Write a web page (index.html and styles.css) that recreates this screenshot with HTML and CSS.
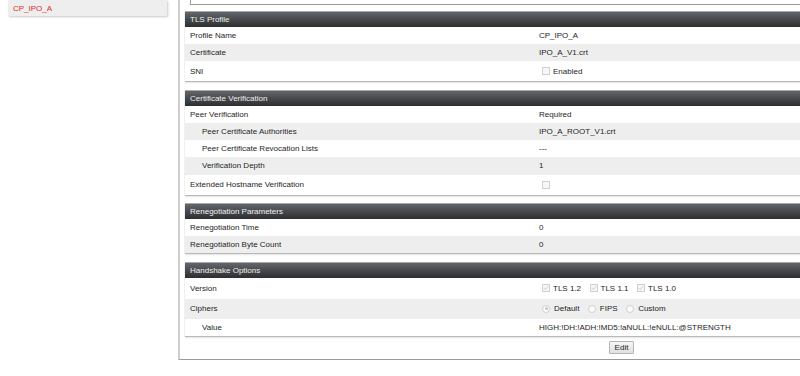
FILE: index.html
```html
<!DOCTYPE html>
<html>
<head>
<meta charset="utf-8">
<title>TLS Profile</title>
<link rel="stylesheet" href="styles.css">
</head>
<body>
<div class="page">
  <aside class="side">
    <div class="side-item">CP_IPO_A</div>
  </aside>
  <main class="main">
    <div class="topbox"></div>

    <section class="panel">
      <div class="ph">TLS Profile</div>
      <div class="row"><div class="lbl">Profile Name</div><div class="val">CP_IPO_A</div></div>
      <div class="row"><div class="lbl">Certificate</div><div class="val">IPO_A_V1.crt</div></div>
      <div class="row tall"><div class="lbl">SNI</div><div class="val"><span class="opt"><span class="cb"></span>Enabled</span></div></div>
    </section>

    <section class="panel">
      <div class="ph">Certificate Verification</div>
      <div class="row"><div class="lbl">Peer Verification</div><div class="val">Required</div></div>
      <div class="row"><div class="lbl sub">Peer Certificate Authorities</div><div class="val">IPO_A_ROOT_V1.crt</div></div>
      <div class="row"><div class="lbl sub">Peer Certificate Revocation Lists</div><div class="val">---</div></div>
      <div class="row"><div class="lbl sub">Verification Depth</div><div class="val">1</div></div>
      <div class="row tall"><div class="lbl">Extended Hostname Verification</div><div class="val"><span class="opt"><span class="cb"></span></span></div></div>
    </section>

    <section class="panel">
      <div class="ph">Renegotiation Parameters</div>
      <div class="row"><div class="lbl">Renegotiation Time</div><div class="val">0</div></div>
      <div class="row"><div class="lbl">Renegotiation Byte Count</div><div class="val">0</div></div>
    </section>

    <section class="panel">
      <div class="ph">Handshake Options</div>
      <div class="row tall v"><div class="lbl">Version</div><div class="val">
        <span class="opt"><span class="cb on"><svg viewBox="0 0 6 6" width="6" height="6"><polyline points="1,3.2 2.4,4.6 5,1.4" fill="none" stroke="#c4c4c4" stroke-width="0.9"/></svg></span>TLS 1.2</span>
        <span class="opt"><span class="cb on"><svg viewBox="0 0 6 6" width="6" height="6"><polyline points="1,3.2 2.4,4.6 5,1.4" fill="none" stroke="#c4c4c4" stroke-width="0.9"/></svg></span>TLS 1.1</span>
        <span class="opt"><span class="cb on"><svg viewBox="0 0 6 6" width="6" height="6"><polyline points="1,3.2 2.4,4.6 5,1.4" fill="none" stroke="#c4c4c4" stroke-width="0.9"/></svg></span>TLS 1.0</span>
      </div></div>
      <div class="row tall"><div class="lbl">Ciphers</div><div class="val">
        <span class="opt"><span class="rb on"></span>Default</span>
        <span class="opt"><span class="rb"></span>FIPS</span>
        <span class="opt"><span class="rb"></span>Custom</span>
      </div></div>
      <div class="row"><div class="lbl sub">Value</div><div class="val">HIGH:!DH:!ADH:!MD5:!aNULL:!eNULL:@STRENGTH</div></div>
    </section>

    <div class="actions"><button class="btn" type="button">Edit</button></div>
  </main>
</div>
</body>
</html>
```
FILE: styles.css
```css
html, body {
  margin: 0;
  padding: 0;
  overflow: hidden;
  background: #ffffff;
}
body {
  font-family: "Liberation Sans", Arial, sans-serif;
  font-size: 8px;
  color: #1e1e1e;
}
.page {
  display: flex;
  align-items: flex-start;
  width: 1100px;
}
.side {
  margin-left: 8px;
  width: 159px;
  box-sizing: border-box;
  height: 16px;
  padding: 4px 5px 0;
  background: #eeeeee;
  box-shadow: 1px 1px 2px rgba(0, 0, 0, 0.22);
}
.side-item {
  color: #e0262b;
  line-height: 9px;
}
.main {
  margin-left: 11px;
  width: 880px;
  height: 360px;
  box-sizing: border-box;
  border-left: 2px solid #cfcfcf;
  border-bottom: 1px solid #9a9a9a;
  padding-left: 5px;
}
.topbox {
  margin-left: 5px;
  height: 4px;
  border-left: 1px solid #9a9a9a;
  border-bottom: 1px solid #9a9a9a;
}
.panel {
  margin-top: 6px;
  margin-bottom: 8.4px;
  background: #ffffff;
  box-shadow: 0 1px 1px rgba(0, 0, 0, 0.22), 0 2px 2px rgba(0, 0, 0, 0.08);
}
.panel + .panel {
  margin-top: 0;
}
.ph {
  height: 16px;
  line-height: 15px;
  box-sizing: border-box;
  padding-left: 5px;
  color: #efefef;
  border-top: 1px solid #a8a8a8;
  background: linear-gradient(#62666a, #2c2e30);
}
.row {
  display: grid;
  grid-template-columns: 354px 1fr;
  align-items: center;
  height: 17.2px;
  background: #ffffff;
}
.row:nth-child(odd) {
  background: #eeeeee;
}
.row.tall {
  height: 20px;
}
.row.v {
  height: 21px;
}
.lbl {
  padding-left: 5px;
}
.lbl.sub {
  padding-left: 17px;
}
.val {
  display: flex;
  align-items: center;
}
.opt {
  display: inline-flex;
  align-items: center;
  margin-right: 8.5px;
}
.opt:first-child .cb,
.opt:first-child .rb {
  margin-left: 3px;
}
.cb {
  display: inline-flex;
  align-items: center;
  justify-content: center;
  width: 6px;
  height: 6px;
  border: 1px solid #d0d0d0;
  background: #f7f7f7;
  margin-right: 3px;
}
.rb {
  display: inline-flex;
  align-items: center;
  justify-content: center;
  width: 6px;
  height: 6px;
  border: 1px solid #d0d0d0;
  border-radius: 50%;
  background: #fafafa;
  margin-right: 4px;
}
.rb.on::after {
  content: "";
  width: 3px;
  height: 3px;
  border-radius: 50%;
  background: #c6c6c6;
}
.actions {
  display: flex;
  justify-content: center;
  margin-top: -3px;
}
.btn {
  font-family: "Liberation Sans", Arial, sans-serif;
  font-size: 8px;
  color: #1e1e1e;
  line-height: 9px;
  padding: 1px 5px;
  border: 1px solid #b4b4b4;
  border-radius: 1px;
  background: linear-gradient(#f6f6f6, #e0e0e0);
}
```
